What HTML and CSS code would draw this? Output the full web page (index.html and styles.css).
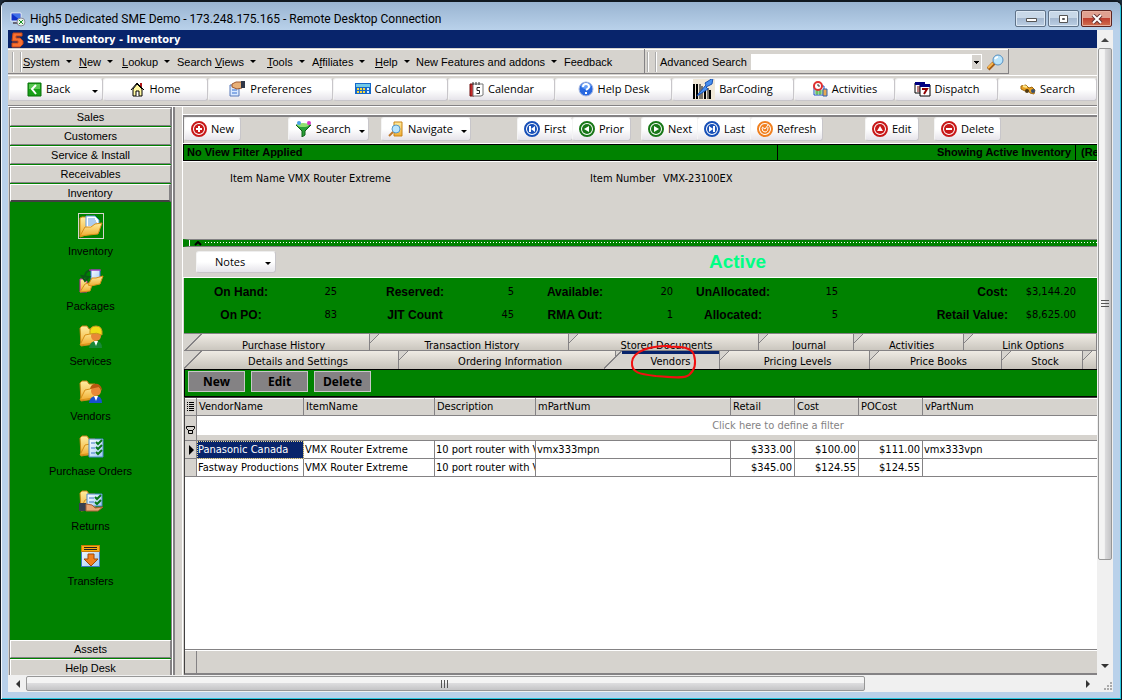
FILE: index.html
```html
<!DOCTYPE html>
<html lang="en">
<head>
    <meta charset="UTF-8">
    <meta name="viewport" content="width=device-width, initial-scale=1.0">
    <title>SME - Inventory</title>
    <link rel="stylesheet" href="styles.css">
</head>
<body>
<!-- shared icons -->
<svg class="defs" width="0" height="0">
    <defs>
        <linearGradient id="gFolder" x1="0" y1="0" x2="0" y2="1"><stop offset="0" stop-color="#ffeda0"/><stop offset="1" stop-color="#f0ac30"/></linearGradient>
        <linearGradient id="gPaper" x1="0" y1="0" x2="1" y2="1"><stop offset="0" stop-color="#fff"/><stop offset="1" stop-color="#9cc8f4"/></linearGradient>
        <symbol id="folder" viewBox="0 0 24 24">
            <path d="M1 4l2-2h5l2 3h6v15l-14 2z" fill="url(#gFolder)" stroke="#c88418"/>
            <path d="M1 21l5-10 5-1 7-3-3 12z" fill="url(#gFolder)" stroke="#d89018"/>
        </symbol>
        <symbol id="checks" viewBox="0 0 16 20">
            <path d="M1 1h14v18H1z" fill="url(#gPaper)" stroke="#4888c8"/>
            <path d="M3 5h4M3 10h4M3 15h4" stroke="#4078c0"/>
            <path d="M8 4l2 2 4-4M8 9l2 2 4-4M8 14l2 2 4-4" fill="none" stroke="#087818" stroke-width="2"/>
        </symbol>
        <symbol id="ring" viewBox="0 0 16 16">
            <circle cx="8" cy="8" r="7" fill="#fff" stroke="currentColor" stroke-width="2"/>
            <circle cx="8" cy="8" r="5" fill="currentColor"/>
        </symbol>
    </defs>
</svg>

<div class="window">
    <header class="titlebar">
        <svg width="16" height="16" viewBox="0 0 16 16"><path d="M1 2h10v8H1z" fill="#1030c8" stroke="#e8f0f8"/><path d="M2 3l8 6V3z" fill="#4070e8"/><path d="M3 12h5" stroke="#667" stroke-width="2"/><circle cx="11" cy="11" r="4" fill="#e8f4e8" stroke="#889"/><path d="M9 9l2 2-2 2M13 9l-2 2 2 2" fill="none" stroke="#189028"/></svg>
        <h1>High5 Dedicated SME Demo - 173.248.175.165 - Remote Desktop Connection</h1>
        <div class="window-buttons">
            <button type="button" aria-label="Minimize"><svg width="12" height="10"><path d="M1.5 4.5h10v3h-10z" fill="#fff" stroke="#555"/></svg></button>
            <button type="button" aria-label="Restore"><svg width="11" height="10"><path d="M1.5 1.5h8v7h-8z" fill="#fff" stroke="#555"/><path d="M4.5 4.5h2v1h-2z" fill="#aac" stroke="#555"/></svg></button>
            <button type="button" class="close" aria-label="Close"><svg width="12" height="10"><path d="M2 1l8 8M10 1L2 9" stroke="#633" stroke-width="4"/><path d="M2 1l8 8M10 1L2 9" stroke="#fff" stroke-width="2"/></svg></button>
        </div>
    </header>

    <div class="viewport">
        <div class="app">
            <div class="app-title">
                <svg width="13" height="16" viewBox="0 0 13 16"><path d="M2 1h9v3H5v2h4l3 3v3l-3 3H1v-4h6V9H1z" fill="#f87030" stroke="#c84818"/></svg>
                <span>SME - Inventory - Inventory</span>
            </div>

            <div class="menubar">
                <nav class="menus">
                    <a href="#" class="drop"><u>S</u>ystem</a>
                    <a href="#" class="drop"><u>N</u>ew</a>
                    <a href="#" class="drop"><u>L</u>ookup</a>
                    <a href="#" class="drop">Search <u>V</u>iews</a>
                    <a href="#" class="drop"><u>T</u>ools</a>
                    <a href="#" class="drop">A<u>f</u>filiates</a>
                    <a href="#" class="drop"><u>H</u>elp</a>
                    <a href="#" class="drop">New Features and addons</a>
                    <a href="#">Feedback</a>
                </nav>
                <form class="advanced">
                    <label for="adv">Advanced Search</label>
                    <select id="adv"><option></option></select>
                    <button type="button" aria-label="Search"><svg width="17" height="17" viewBox="0 0 17 17"><path d="M1 15l6-6" stroke="#a05c18" stroke-width="4"/><path d="M1 14l5-5" stroke="#f8b850" stroke-width="2"/><circle cx="11" cy="6" r="5" fill="#b8e4fc" stroke="#5890c0"/><path d="M8 5q1-2 3-2" stroke="#fff" stroke-width="2" fill="none"/></svg></button>
                </form>
            </div>

            <div class="toolbar">
                <button type="button" class="back">
                    <svg width="15" height="15" viewBox="0 0 15 15"><path d="M1 1h13v13H1z" fill="#18a018" stroke="#087008"/><path d="M2 2h11v5H2z" fill="#58c850"/><path d="M9 3L5 7l4 5" fill="none" stroke="#fff" stroke-width="2"/></svg>Back<i class="arrow"></i></button>
                <button type="button"><svg width="15" height="16" viewBox="0 0 15 16"><path d="M10 2h2v4h-2z" fill="#b01818"/><path d="M3 8v7h9V8L7 3z" fill="#fff8a0" stroke="#000"/><path d="M1 9l6-7 7 7" fill="none" stroke="#000"/><path d="M6 15v-5h3v5" fill="#fff" stroke="#000"/></svg>Home</button>
                <button type="button"><svg width="17" height="16" viewBox="0 0 17 16"><path d="M1 4h9v11H1z" fill="#d8e8ff" stroke="#5878b8"/><path d="M3 9h5M3 12h5" stroke="#3870d0"/><path d="M3 3l4-2h6v6L8 8 3 6z" fill="#e8b078" stroke="#9c5830"/><path d="M12 0h4v7h-4z" fill="#303848"/></svg>Preferences</button>
                <button type="button"><svg width="16" height="14" viewBox="0 0 16 14"><path d="M0 1h16v11H0z" fill="#1868c8"/><path d="M1 2h14v3H1z" fill="#70c8e8"/><path d="M2 7h2M5 7h2M8 7h2M2 10h2M5 10h2M8 10h2" stroke="#f8d840" stroke-width="2"/><path d="M12 7h2M12 10h2" stroke="#d8f0ff" stroke-width="2"/></svg>Calculator</button>
                <button type="button"><svg width="15" height="16" viewBox="0 0 15 16"><path d="M1 3h4v12H1z" fill="#c82828" stroke="#701010"/><path d="M4 3h10v11l-2 1H4z" fill="#fff" stroke="#777"/><path d="M4 1v3M7 1v3M10 1v3" stroke="#333"/><path d="M11 6.5H8v3h2.500v3H7.500" fill="none" stroke="#222"/></svg>Calendar</button>
                <button type="button"><svg width="16" height="16" viewBox="0 0 16 16"><circle cx="8" cy="8" r="7" fill="#2868e0" stroke="#a8b8e0"/><ellipse cx="8" cy="5" rx="5" ry="3" fill="#68a0f8"/><path d="M5 6q0-3 3-3t3 3q0 1-3 3M8 11v2" fill="none" stroke="#fff" stroke-width="2"/></svg>Help Desk</button>
                <button type="button"><svg width="22" height="22" viewBox="0 0 22 22"><path d="M0 0h22v22H0z" fill="#f0e8d8"/><path d="M1 6v15M4 6v15M12 10v11M17 12v9" stroke="#000" stroke-width="2"/><path d="M7 6v15M9 8v13M15 10v11" stroke="#000"/><path d="M20 0l-8 5 1 2-7 8-2 3 11-7-2-2 6-3z" fill="#4890f0" stroke="#1850b0"/></svg>BarCoding</button>
                <button type="button"><svg width="16" height="16" viewBox="0 0 16 16"><path d="M2 5h10v9H2z" fill="#fff" stroke="#1850c0"/><path d="M3 10h8M3 12h8M5 7v7M8 7v7" stroke="#38a838"/><circle cx="6" cy="5" r="4" fill="#fff" stroke="#e03030" stroke-width="2"/><path d="M6 3v2h2" fill="none" stroke="#333"/><path d="M11 8h4v7h-4z" fill="#e8a850" stroke="#3060b0"/></svg>Activities</button>
                <button type="button"><svg width="17" height="16" viewBox="0 0 17 16"><path d="M1 2h9v10H1z" fill="#fff" stroke="#000"/><path d="M1 1h10v3H1z" fill="#000080"/><path d="M3 6h3M3 8h3M3 10h3" stroke="#800000"/><path d="M6 4h10v11H6z" fill="#fff" stroke="#000"/><path d="M6 3h10v3H6z" fill="#000080"/><path d="M8 8h5l-3 5" fill="none" stroke="#900000" stroke-width="2"/></svg>Dispatch</button>
                <button type="button"><svg width="16" height="12" viewBox="0 0 16 12"><path d="M1 3l5-1 3 3 3-1 3 3-1 4-4-1-2-3-3 1-4-2z" fill="#e8a020" stroke="#a06810"/><path d="M3 3l4 1" stroke="#ffe890" stroke-width="2"/><circle cx="13" cy="8" r="2" fill="#385070"/><circle cx="7" cy="8" r="2" fill="#503810"/></svg>Search</button>
            </div>

            <div class="body">
                <aside class="sidebar">
                    <button type="button" class="group">Sales</button>
                    <button type="button" class="group">Customers</button>
                    <button type="button" class="group">Service &amp; Install</button>
                    <button type="button" class="group">Receivables</button>
                    <button type="button" class="group open">Inventory</button>
                    <nav class="shortcuts">
                        <a href="#" class="current"><svg width="26" height="26" viewBox="0 0 26 26"><path d="M2 5l2-1h5l2 3v14l-9 3z" fill="url(#gFolder)" stroke="#d89018"/><path d="M8 3h9l4 4v12H8z" fill="#fff" stroke="#5898e0"/><path d="M10 6h7M10 8h8M10 10h9M10 12h9" stroke="#5898e0"/><path d="M2 23l5-9h6l4-3 7-1-4 11z" fill="url(#gFolder)" stroke="#d89018"/></svg>Inventory</a>
                        <a href="#"><svg width="26" height="26" viewBox="0 0 26 26"><path d="M2 11h5l2 2v11H2z" fill="url(#gFolder)" stroke="#c020a0"/><path d="M13 2h9v12h-9z" fill="url(#gPaper)" stroke="#3870d8"/><path d="M2 24l5-8 8-2-3 9z" fill="url(#gFolder)" stroke="#d89018"/><path d="M10 17l4-7h4l7-2-3 8-9 2z" fill="url(#gFolder)" stroke="#d89018"/><path d="M12 2.500Q7 3 7 9M4 8l3 5 4-4z" fill="none" stroke="#0a5a14" stroke-width="2"/><path d="M11 2h12" stroke="#d020b0"/></svg>Packages</a>
                        <a href="#"><svg width="26" height="26" viewBox="0 0 26 26"><use href="#folder" x="1" y="1" width="24" height="24"/><path d="M11 25q1-7 7-7t6 7z" fill="#188838"/><circle cx="18" cy="13" r="5" fill="#e88838"/><path d="M12 11q-1-8 6-8t6 9q-5-3-12-1z" fill="#f0dc18" stroke="#c89820"/><path d="M16 18l2 5 2-5z" fill="#fff"/></svg>Services</a>
                        <a href="#"><svg width="26" height="26" viewBox="0 0 26 26"><use href="#folder" x="1" y="1" width="24" height="24"/><path d="M11 25q1-7 7-7t6 7z" fill="#1850d0"/><circle cx="18" cy="13" r="5" fill="#e88838"/><path d="M12 11q1-6 8-5 4 2 4 7l-3-4z" fill="#b85810"/><path d="M16 18l2 5 2-5z" fill="#fff"/></svg>Vendors</a>
                        <a href="#"><svg width="26" height="26" viewBox="0 0 26 26"><use href="#folder" x="1" y="1" width="24" height="24"/><use href="#checks" x="10" y="5" width="16" height="20"/></svg>Purchase Orders</a>
                        <a href="#"><svg width="26" height="26" viewBox="0 0 26 26"><use href="#folder" x="1" y="1" width="24" height="24"/><path d="M9 6h15v12H9z" fill="url(#gPaper)" stroke="#4888c8"/><path d="M11 10h5M11 14h5" stroke="#4078c0"/><path d="M17 9l2 2 4-4M17 14l2 2 4-4" fill="none" stroke="#087818" stroke-width="2"/><path d="M1 15h7v8H1z" fill="#384050"/><path d="M8 16l6 1 3 3 8-1-5 4H8z" fill="#e8a878" stroke="#a86038"/></svg>Returns</a>
                        <a href="#"><svg width="26" height="26" viewBox="0 0 26 26"><path d="M3.500 2.500h18v21h-18z" fill="url(#gPaper)" stroke="#3878c0"/><path d="M3.500 2.500h18v6h-18z" fill="#f8b010" stroke="#c87808"/><path d="M6 4.500h13M6 6.500h13" stroke="#222"/><path d="M10 11h6v5h4l-7 7-7-7h4z" fill="#f08020" stroke="#a04808"/></svg>Transfers</a>
                    </nav>
                    <button type="button" class="group">Assets</button>
                    <button type="button" class="group">Help Desk</button>
                </aside>

                <main>
                    <div class="record-bar">
                        <button type="button" class="red"><svg width="16" height="16" viewBox="0 0 16 16"><use href="#ring"/><path d="M8 5v6M5 8h6" stroke="#fff" stroke-width="2"/></svg>New</button>
                        <button type="button"><svg width="17" height="16" viewBox="0 0 17 16"><path d="M1 4h15l-6 6v4l-3 2v-6z" fill="#28a038" stroke="#106018"/><ellipse cx="8" cy="4" rx="6" ry="2" fill="#90e070"/><circle cx="4" cy="2" r="2" fill="#48a0e8"/><circle cx="14" cy="2" r="2" fill="#d838c8"/></svg>Search<i class="arrow"></i></button>
                        <button type="button"><svg width="16" height="16" viewBox="0 0 16 16"><path d="M6 1h8v14H6z" fill="url(#gFolder)" stroke="#c88418"/><circle cx="8" cy="8" r="4" fill="#b8e4fc" stroke="#5898c8"/><path d="M1 15l4-4" stroke="#c07828" stroke-width="2"/></svg>Navigate<i class="arrow"></i></button>
                        <button type="button" class="blue"><svg width="16" height="16" viewBox="0 0 16 16"><use href="#ring"/><path d="M11 5v6L7 8z" fill="#fff"/><path d="M6 5v6" stroke="#fff" stroke-width="2"/></svg>First</button>
                        <button type="button" class="green"><svg width="16" height="16" viewBox="0 0 16 16"><use href="#ring"/><path d="M10 5v6L5 8z" fill="#fff"/></svg>Prior</button>
                        <button type="button" class="green"><svg width="16" height="16" viewBox="0 0 16 16"><use href="#ring"/><path d="M6 5v6l5-3z" fill="#fff"/></svg>Next</button>
                        <button type="button" class="blue"><svg width="16" height="16" viewBox="0 0 16 16"><use href="#ring"/><path d="M5 5v6l4-3z" fill="#fff"/><path d="M10 5v6" stroke="#fff" stroke-width="2"/></svg>Last</button>
                        <button type="button" class="orange"><svg width="16" height="16" viewBox="0 0 16 16"><use href="#ring"/><path d="M5 7q0 4 3 4t3-5M5 6l3 2 3-4" fill="none" stroke="#fff"/></svg>Refresh</button>
                        <button type="button" class="red"><svg width="16" height="16" viewBox="0 0 16 16"><use href="#ring"/><path d="M5 10h6L8 5z" fill="#fff"/></svg>Edit</button>
                        <button type="button" class="red"><svg width="16" height="16" viewBox="0 0 16 16"><use href="#ring"/><path d="M5 8h6" stroke="#fff" stroke-width="2"/></svg>Delete</button>
                    </div>

                    <div class="filter-bar">
                        <span>No View Filter Applied</span>
                        <span>Showing Active Inventory</span>
                        <span>(Re</span>
                    </div>

                    <dl class="item">
                        <dt>Item Name</dt><dd>VMX Router Extreme</dd>
                        <dt>Item Number</dt><dd>VMX-23100EX</dd>
                    </dl>
                    <div class="splitter"><svg width="9" height="5"><path d="M1 4l3-3 3 3" fill="none" stroke="#000" stroke-width="2"/></svg></div>

                    <div class="status">
                        <button type="button">Notes<i class="arrow"></i></button>
                        <strong>Active</strong>
                    </div>

                    <dl class="stock">
                        <dt>On Hand:</dt><dd>25</dd>
                        <dt>Reserved:</dt><dd>5</dd>
                        <dt>Available:</dt><dd>20</dd>
                        <dt>UnAllocated:</dt><dd>15</dd>
                        <dt class="money">Cost:</dt><dd>$3,144.20</dd>
                        <dt>On PO:</dt><dd>83</dd>
                        <dt>JIT Count</dt><dd>45</dd>
                        <dt>RMA Out:</dt><dd>1</dd>
                        <dt>Allocated:</dt><dd>5</dd>
                        <dt class="money">Retail Value:</dt><dd>$8,625.00</dd>
                    </dl>

                    <div class="tabs tabs-back">
                        <button type="button">Purchase History</button>
                        <button type="button">Transaction History</button>
                        <button type="button">Stored Documents</button>
                        <button type="button">Journal</button>
                        <button type="button">Activities</button>
                        <button type="button">Link Options</button>
                    </div>
                    <div class="tabs tabs-front">
                        <button type="button">Details and Settings</button>
                        <button type="button">Ordering Information</button>
                        <button type="button" class="active">Vendors
                            <svg class="mark" width="70" height="40" viewBox="0 0 70 40"><path d="M42 3C22 2 4 8 3 19c-1 11 8 12 24 14 14 1 29 3 33-1 6-5 7-13 5-20C63 4 52 3 38 4" fill="none" stroke="#f01010" stroke-width="2"/></svg>
                        </button>
                        <button type="button">Pricing Levels</button>
                        <button type="button">Price Books</button>
                        <button type="button">Stock</button>
                        <button type="button" aria-label="More"></button>
                    </div>

                    <div class="grid-actions">
                        <button type="button">New</button>
                        <button type="button">Edit</button>
                        <button type="button">Delete</button>
                    </div>

                    <div class="grid-box">
                        <table>
                            <colgroup><col class="c-mark"><col class="c-vendor"><col class="c-item"><col class="c-desc"><col class="c-mpart"><col class="c-price"><col class="c-price"><col class="c-price"><col></colgroup>
                            <thead>
                                <tr>
                                    <th><svg width="9" height="10"><path d="M1 .5h1M1 2.500h1M1 4.500h1M1 6.500h1M1 8.500h1M3 .5h5M3 2.500h5M3 4.500h5M3 6.500h5M3 8.500h5" stroke="#000"/></svg></th>
                                    <th>VendorName</th><th>ItemName</th><th>Description</th><th>mPartNum</th><th>Retail</th><th>Cost</th><th>POCost</th><th>vPartNum</th>
                                </tr>
                            </thead>
                            <tbody>
                                <tr class="filter">
                                    <td><svg width="9" height="10"><path d="M.5 1.500h8v2l-2 2h-4l-2-2zM2.500 5.500h4v3h-4z" fill="none" stroke="#000"/></svg></td>
                                    <td colspan="8">Click here to define a filter</td>
                                </tr>
                                <tr>
                                    <td><svg width="7" height="10"><path d="M1 0v10l5-5z"/></svg></td>
                                    <td class="selected">Panasonic Canada</td><td>VMX Router Extreme</td><td>10 port router with V</td><td>vmx333mpn</td>
                                    <td class="num">$333.00</td><td class="num">$100.00</td><td class="num">$111.00</td><td>vmx333vpn</td>
                                </tr>
                                <tr>
                                    <td></td>
                                    <td>Fastway Productions</td><td>VMX Router Extreme</td><td>10 port router with V</td><td></td>
                                    <td class="num">$345.00</td><td class="num">$124.55</td><td class="num">$124.55</td><td></td>
                                </tr>
                            </tbody>
                        </table>
                        <div class="grid-footer"></div>
                    </div>
                </main>
            </div>
        </div>

        <div class="vscroll">
            <button type="button" aria-label="Scroll up"><svg width="8" height="5"><path d="M0 5l4-4 4 4z" fill="#444"/></svg></button>
            <div class="vthumb"><svg width="8" height="8"><path d="M0 .5h8M0 3.500h8M0 6.500h8" stroke="#555"/></svg></div>
            <button type="button" aria-label="Scroll down"><svg width="8" height="5"><path d="M0 0l4 4 4-4z" fill="#333"/></svg></button>
        </div>
        <div class="hscroll">
            <button type="button" aria-label="Scroll left"><svg width="5" height="8"><path d="M5 0L1 4l4 4z" fill="#333"/></svg></button>
            <div class="hthumb"><svg width="8" height="8"><path d="M.5 0v8M3.500 0v8M6.500 0v8" stroke="#555"/></svg></div>
            <button type="button" aria-label="Scroll right"><svg width="5" height="8"><path d="M0 0l4 4-4 4z" fill="#333"/></svg></button>
        </div>
        <div class="corner"><svg width="10" height="10"><path d="M7 1h2M4 4h2M7 4h2M1 7h2M4 7h2M7 7h2" stroke="#aaa" stroke-width="2"/></svg></div>
    </div>
</div>
</body>
</html>
```

FILE: styles.css
```css
* {
    box-sizing: border-box;
}

body {
    margin: 0;
    background: #1c2a38;
    color: #000;
    font: 11px/14px "DejaVu Sans Condensed", "DejaVu Sans", sans-serif;
}

button {
    font: inherit;
    color: inherit;
    padding: 0;
}

a {
    color: inherit;
    text-decoration: none;
}

svg {
    flex: none;
}

.defs {
    position: absolute;
}

dl, dd {
    margin: 0;
}

/* outer window */
.window {
    display: flex;
    flex-direction: column;
    height: 100vh;
    padding: 0 8px 7px 6px;
    border: 1px solid #101820;
    border-top-width: 2px;
    border-radius: 7px 7px 0 0;
    background: #b9d1ea;
    box-shadow: inset 1px 1px #f4f8fc, inset -1px -1px #28c8e0;
    overflow: hidden;
}

.titlebar {
    display: flex;
    align-items: center;
    gap: 4px;
    height: 28px;
    margin: 0 -7px 0 -5px;
    padding: 5px 8px 0 8px;
    background: linear-gradient(#99b4d1, #b9d1ea);
}

.titlebar h1 {
    flex: 1;
    margin: 0;
    font: 12px/16px Roboto, sans-serif;
}

.window-buttons {
    display: flex;
    gap: 2px;
}

.window-buttons button {
    display: flex;
    align-items: center;
    justify-content: center;
    width: 31px;
    height: 17px;
    border: 1px solid #5f7288;
    border-radius: 2px;
    background: linear-gradient(#c8d8e8 50%, #a4b8d0 50%, #bccfe4);
    box-shadow: inset 0 0 0 1px #dce8f4;
}

.window-buttons .close {
    border-color: #5c2420;
    background: linear-gradient(#e0a090 50%, #c04030 50%, #d07050);
    box-shadow: inset 0 0 0 1px #e8b0a0;
}

.viewport {
    display: grid;
    grid-template-columns: 1fr 16px;
    grid-template-rows: 1fr 17px;
    flex: 1;
    min-height: 0;
    margin-left: 1px;
}

.app {
    display: flex;
    flex-direction: column;
    min-width: 0;
    min-height: 0;
    background: #d6d3ce;
    overflow: hidden;
}

.app-title {
    display: flex;
    align-items: center;
    gap: 3px;
    height: 18px;
    padding: 1px 0 0 3px;
    background: #08246b;
    color: #fff;
    font-weight: bold;
}

/* menus */
.menubar {
    display: flex;
    height: 28px;
    padding: 1px 0;
    border-bottom: 1px solid #fff;
    font-family: "Liberation Sans", sans-serif;
}

.menus, .advanced {
    display: flex;
    align-items: center;
    padding-top: 2px;
    border: 1px solid #848284;
    border-width: 0 1px 1px 0;
    box-shadow: inset 0 1px #fff;
}

.menus::before, .advanced::before {
    content: "";
    align-self: center;
    width: 6px;
    height: 20px;
    margin: 0 5px 0 4px;
    border: 2px groove #fff;
    border-width: 0 2px;
}

.menus {
    display: grid;
    grid-template-columns: 15px 56px 43px 55px 90px 45px 63px 41px 148px 80px;
}

.drop::after, .arrow {
    content: "";
    display: inline-block;
    border: 3px solid transparent;
    border-top-color: #000;
    border-bottom: 0;
}

.drop::after {
    margin-left: 6px;
    vertical-align: 3px;
}

.advanced {
    width: 364px;
}

.advanced::before {
    margin: 0 3px 0 2px;
    flex: none;
}

.advanced label {
    flex: none;
    width: 91px;
}

.advanced select {
    flex: 1;
    height: 16px;
    padding: 0;
    border: 0;
    border-radius: 0;
    appearance: none;
    background: linear-gradient(#000, #000) right 3px top 7px / 5px 1px no-repeat,
        linear-gradient(#000, #000) right 4px top 8px / 3px 1px no-repeat,
        linear-gradient(#000, #000) right 5px top 9px / 1px 1px no-repeat,
        linear-gradient(#d6d3ce, #d6d3ce) right 1px center / 9px 14px no-repeat,
        #fff;
}

.advanced button {
    display: flex;
    margin: 0 4px 0 5px;
    border: 0;
    background: none;
}

/* main toolbar */
.toolbar {
    display: grid;
    grid-template-columns: 94px 105px 125px 115px 107px 117px 122px 101px 103px 1fr;
    height: 30px;
    padding: 2px 0 4px 1px;
    border-bottom: 1px solid #848284;
}

.toolbar button, .record-bar button, .status button {
    display: flex;
    align-items: center;
    justify-content: center;
    gap: 4px;
    min-width: 0;
    border: 1px solid #c8c6ca;
    border-top-color: #eee;
    border-left-color: #f4f4f4;
    border-radius: 3px;
    background: linear-gradient(#fff 50%, #e6e4ea);
    font: 11px/16px "Open Sans", sans-serif;
    white-space: nowrap;
    overflow: hidden;
}

.toolbar button {
    padding-bottom: 1px;
}

.toolbar .back {
    justify-content: flex-start;
    padding: 0 4px 1px 17px;
}

.back .arrow {
    margin: 4px 0 0 auto;
}

.body {
    display: grid;
    grid-template-columns: 163px 1fr;
    gap: 10px;
    flex: 1;
    min-height: 0;
    padding-left: 1px;
    border-top: 1px solid #fff;
}

/* outlook style side bar */
.sidebar {
    display: flex;
    flex-direction: column;
    border: 1px solid #848284;
    border-width: 1px 1px 0;
    background: #008200;
    font-family: "Liberation Sans", sans-serif;
    box-shadow: 1px 0 #fff, 3px 0 #848284;
}

.group {
    flex: none;
    height: 18px;
    margin-bottom: 1px;
    border: 1px solid #848284;
    border-top-color: #fff;
    border-left-color: #fff;
    background: #d6d3ce;
}

.group.open {
    border-right: 2px solid #848284;
    border-bottom: 2px solid #424142;
}

.group:last-child {
    height: 16px;
    margin: 0;
    border-bottom: 0;
}

.shortcuts {
    display: flex;
    flex-direction: column;
    flex: 1;
    padding-top: 10px;
    min-height: 0;
}

.shortcuts a {
    display: flex;
    flex-direction: column;
    align-items: center;
    gap: 5px;
    height: 55px;
}

.current svg {
    outline: 1px solid #d6d3ce;
    outline-offset: -1px;
}

main {
    display: flex;
    flex-direction: column;
    min-width: 0;
    min-height: 0;
    padding-top: 8px;
    border-left: 1px solid #fff;
}

.record-bar {
    display: grid;
    grid-template-columns: 104px 93px 136px 55px 69px 56px 53px 115px 69px 1fr;
    height: 29px;
    padding-bottom: 3px;
    border: 2px solid #848284;
    border-width: 2px 0 0 1px;
    box-shadow: 0 -1px #fff;
}

.record-bar button {
    justify-self: start;
    padding: 0 6px;
}

.record-bar .arrow {
    margin: 4px -3px 0 4px;
}

.red { --ring: #c81818; }
.blue { --ring: #1850b8; }
.green { --ring: #187818; }
.orange { --ring: #f08020; }

.record-bar svg {
    color: var(--ring);
}

.filter-bar {
    display: grid;
    grid-template-columns: 594px 298px 1fr;
    height: 17px;
    border: 1px solid #000;
    border-right: 0;
    background: #008200;
    font: bold 11px/14px "Liberation Sans", sans-serif;
    box-shadow: 0 -1px #fff, 0 1px #fff;
}

.filter-bar span {
    padding: 0 4px 0 3px;
    border-right: 1px solid #000;
    white-space: nowrap;
    overflow: hidden;
}

.filter-bar span + span {
    text-align: right;
}

.filter-bar span:last-child {
    padding: 0 0 0 5px;
    border: 0;
    text-align: left;
}

.item {
    display: grid;
    grid-template-columns: 58px 302px 73px 1fr;
    height: 78px;
    padding: 11px 0 0 47px;
}

.splitter {
    height: 8px;
    padding: 1px 5px;
    border: 1px solid #848284;
    border-width: 1px 0;
    border-left: 6px solid #008200;
    background: repeating-linear-gradient(90deg, #fff 0 1px, #008200 1px 3px) 16px 2px / 100% 1px no-repeat, #008200;
    box-shadow: inset 1px 0 #fff;
}

.splitter svg {
    display: block;
}

.status {
    display: grid;
    grid-template-columns: 513px 1fr;
    align-items: center;
    height: 31px;
    padding: 0 0 1px 13px;
    border-bottom: 1px solid #fff;
}

.status button {
    width: 80px;
    height: 22px;
    padding: 0 4px 0 18px;
}

.status .arrow {
    margin: 4px 0 0 auto;
}

.status strong {
    color: #00ff84;
    font: bold 19px/22px "Liberation Sans", sans-serif;
}

.stock {
    display: grid;
    grid-template-columns: 114px 39px 156px 21px 122px 37px 120px 45px 170px 68px;
    grid-auto-rows: 23px;
    align-items: center;
    height: 55px;
    padding-top: 2px;
    background: #008200;
    margin-left: 1px;
}

.stock dt {
    font: bold 12px/14px "Liberation Sans", sans-serif;
    text-align: center;
}

.stock dt.money, .stock dd {
    text-align: right;
}

/* two rows of tabs */
.tabs {
    display: grid;
    height: 17px;
    margin-left: 1px;
    border-top: 1px solid #848284;
}

.tabs-back {
    grid-template-columns: 186px 199px 190px 95px 110px 1fr;
    overflow: hidden;
}

.tabs-front {
    grid-template-columns: 215px 217px 104px 150px 132px 81px 1fr;
    height: 19px;
}

.tabs button {
    height: 18px;
    padding: 4px 0 0 6px;
    border: 0;
    border-right: 1px solid #848284;
    background: linear-gradient(135deg, #d6d3ce 6px, #848284 6px 7px, transparent 7px), linear-gradient(#efebe4, #c6c2ba);
    white-space: nowrap;
}

.tabs-back button {
    padding-top: 5px;
}

.tabs button:first-child {
    padding-left: 14px;
    background: linear-gradient(135deg, #d6d3ce 12px, #848284 12px 13px, transparent 13px), linear-gradient(#efebe4, #c6c2ba);
}

.tabs .active {
    position: relative;
    margin-left: -12px;
    padding-left: 18px;
    background: linear-gradient(#08246b, #08246b) 18px 0 / 100% 3px no-repeat,
        linear-gradient(135deg, transparent 12px, #848284 12px 13px, #d6d3ce 13px);
}

/* red pen circle round the open tab */
.mark {
    position: absolute;
    top: -8px;
    left: 25px;
    pointer-events: none;
}

.grid-actions {
    display: flex;
    gap: 6px;
    height: 28px;
    margin-left: 1px;
    padding: 1px 3px;
    border: 1px solid #000;
    border-width: 1px 0 1px 1px;
    background: #008200;
}

.grid-actions button {
    width: 57px;
    height: 21px;
    border: 1px solid #c8c8c8;
    background: #848284;
    font: bold 12px/16px "Open Sans", sans-serif;
}

/* vendor list */
.grid-box {
    display: flex;
    flex-direction: column;
    flex: 1;
    min-height: 0;
    margin-left: 1px;
    border: 1px solid #424142;
    border-right: 0;
    border-bottom: 2px solid #848284;
    background: #fff;
}

table {
    width: 100%;
    table-layout: fixed;
    border-collapse: separate;
    border-spacing: 0;
}

.c-mark { width: 12px; }
.c-vendor { width: 107px; }
.c-item { width: 131px; }
.c-desc { width: 101px; }
.c-mpart { width: 195px; }
.c-price { width: 64px; }

th, td {
    height: 18px;
    padding: 0 1px;
    border-right: 1px solid #848284;
    border-bottom: 1px solid #848284;
    font-weight: normal;
    text-align: left;
    white-space: nowrap;
    overflow: hidden;
}

th {
    padding: 1px 0 0 2px;
    background: #d6d3ce;
    box-shadow: inset 0 1px #fff;
}

td:first-child {
    background: #d6d3ce;
}

th:first-child, td:first-child {
    padding: 0 1px;
}

th:last-child, td:last-child {
    border-right: 0;
}

td svg, th svg {
    display: block;
}

td:first-child svg {
    margin-left: 2px;
}

.filter td {
    height: 25px;
    color: #848284;
    text-align: center;
}

.filter td:last-child {
    padding: 0 0 4px 262px;
    background: linear-gradient(#d6d3ce, #d6d3ce) 0 100% / 100% 5px no-repeat;
}

.filter td:first-child svg {
    margin: 4px 0 0;
}

td.selected {
    background: #08246b;
    color: #fff;
    outline: 1px dotted #e8d890;
    outline-offset: -1px;
}

td.num {
    padding-right: 2px;
    text-align: right;
}

.grid-footer {
    height: 24px;
    margin-top: auto;
    padding-left: 11px;
    border-top: 1px solid #848284;
    background: linear-gradient(#848284, #848284) 11px 0 / 1px 100% no-repeat, #d6d3ce;
    box-shadow: inset 0 1px #fff;
}

/* scroll bars */
.vscroll, .hscroll {
    display: flex;
    background: #f0f0f0;
}

.vscroll {
    flex-direction: column;
}

.vscroll button, .hscroll button {
    flex: none;
    display: flex;
    align-items: center;
    justify-content: center;
    width: 18px;
    border: 0;
    background: none;
}

.vscroll button {
    width: 16px;
    height: 18px;
}

.vscroll button:last-child {
    margin-top: auto;
}

.hscroll button:last-child {
    margin-left: auto;
}

.vthumb, .hthumb {
    display: flex;
    align-items: center;
    justify-content: center;
    border: 1px solid #979797;
    border-radius: 2px;
}

.vthumb {
    height: calc(84% - 30px);
    margin: 0 1px;
    background: linear-gradient(90deg, #f4f4f4 45%, #dcdcde 50%, #c4c4c6);
}

.hthumb {
    width: 77%;
    margin: 1px 0;
    background: linear-gradient(#f4f4f4 45%, #dcdcde 50%, #c4c4c6);
}

.corner {
    display: flex;
    align-items: flex-end;
    justify-content: flex-end;
    background: #f0f0f0;
}
```
